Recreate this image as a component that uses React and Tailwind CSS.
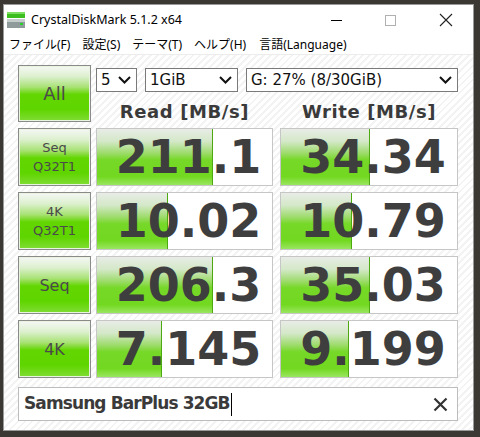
import React from 'react';

const rows = [
  { l1: 'Seq', l2: 'Q32T1', r: '211.1', rw: 'w-[116px]', w: '34.34', ww: 'w-[89px]' },
  { l1: '4K', l2: 'Q32T1', r: '10.02', rw: 'w-[71px]', w: '10.79', ww: 'w-[71px]' },
  { l1: 'Seq', l2: null, r: '206.3', rw: 'w-[116px]', w: '35.03', ww: 'w-[89px]' },
  { l1: '4K', l2: null, r: '7.145', rw: 'w-[65px]', w: '9.199', ww: 'w-[68px]' },
];

const btnBg =
  'bg-[linear-gradient(to_bottom,#f4f7f2_0%,#dcf0ce_18%,#a8e274_38%,#62d600_52%,#5fd500_80%,#7edc30_100%)]';
const fillBg =
  'bg-[linear-gradient(to_bottom,#e8ece6_0%,#d4e8c8_22%,#a0dc70_42%,#76d828_55%,#72d820_85%,#9ae660_100%)]';

function GreenButton({ children, h }) {
  return (
    <div className={`w-[73px] ${h} border border-[#8a8a8a] p-[1px] bg-[#e8f4e0] shrink-0`}>
      <div className={`w-full h-full ${btnBg} flex flex-col items-center justify-center text-[#4a4a4a] leading-[19px]`}>
        {children}
      </div>
    </div>
  );
}

function Cell({ value, fill, w }) {
  return (
    <div className={`relative ${w} h-full border border-[#c6c6c6] bg-white shrink-0`}>
      <div className={`absolute left-0 top-0 bottom-0 ${fill} ${fillBg} border-r border-[#4caa10]`} />
      <div className="relative h-full flex items-center justify-center font-bold text-[46px] text-[#3e3e3e] leading-none pl-[8px]">
        {value}
      </div>
    </div>
  );
}

function Chevron() {
  return (
    <svg width="13" height="8" viewBox="0 0 13 8" className="shrink-0">
      <polyline points="1,1 6.5,6.5 12,1" fill="none" stroke="#111" strokeWidth="2" />
    </svg>
  );
}

function Select({ w, text }) {
  return (
    <div className={`${w} h-[24px] border border-[#7a7a7a] bg-white flex items-center justify-between pl-[4px] pr-[5px] text-[15px] text-[#111] shrink-0`}>
      <span>{text}</span>
      <Chevron />
    </div>
  );
}

export default function App() {
  return (
    <div
      className="w-[480px] h-[437px] bg-[#3b3733] pt-[4px] pl-[3px] overflow-hidden"
      style={{ fontFamily: '"DejaVu Sans", sans-serif' }}
    >
      <div className="w-[471px] h-[427px] bg-white border border-[#9a9a9a] flex flex-col">
        {/* Title bar */}
        <div className="h-[27px] pt-[3px] flex items-center shrink-0">
          <svg width="20" height="18" viewBox="0 0 20 18" className="ml-[2px] mr-[5px]">
            <rect x="1" y="1" width="18" height="6" fill="#3cbf1e" />
            <rect x="1" y="1" width="18" height="2" fill="#7ee060" />
            <rect x="1" y="8" width="18" height="9" fill="#8f9a9a" />
            <rect x="1" y="8" width="18" height="3" fill="#c4cccc" />
            <rect x="14" y="12" width="3" height="2" fill="#2ad02a" />
          </svg>
          <span className="text-[12.5px] text-black" style={{ fontFamily: '"Noto Sans", sans-serif' }}>
            CrystalDiskMark 5.1.2 x64
          </span>
          <div className="flex-1" />
          <div className="w-[11px] h-[1px] bg-black mr-[43px]" />
          <div className="w-[11px] h-[11px] border border-[#b0b0b0] mr-[43px]" />
          <svg width="14" height="14" viewBox="0 0 14 14" className="mr-[20px]">
            <path d="M1 1 L13 13 M13 1 L1 13" stroke="#222" strokeWidth="1.1" />
          </svg>
        </div>
        {/* Menu bar */}
        <div
          className="h-[23px] pt-[3px] flex items-center pl-[5px] text-[12px] text-black border-b border-[#ececec] shrink-0"
          style={{ fontFamily: '"Noto Sans", "Noto Sans CJK JP", sans-serif' }}
        >
          <span className="mr-[12px]">ファイル(F)</span>
          <span className="mr-[12px]">設定(S)</span>
          <span className="mr-[12px]">テーマ(T)</span>
          <span className="mr-[13px]">ヘルプ(H)</span>
          <span>言語(Language)</span>
        </div>
        {/* Client */}
        <div className="flex-1 pl-[14px] pt-[10px] bg-[repeating-linear-gradient(135deg,#ffffff_0px,#ffffff_3px,#f3f3f3_3px,#f3f3f3_5px)]">
          <div className="flex gap-[5px] h-[57px]">
            <GreenButton h="h-[57px]">
              <span className="text-[18px]">All</span>
            </GreenButton>
            <div className="flex flex-col">
              <div className="flex gap-[8px] mt-[3px]">
                <Select w="w-[41px]" text="5" />
                <Select w="w-[93px]" text="1GiB" />
                <Select w="w-[212px]" text="G: 27% (8/30GiB)" />
              </div>
              <div className="flex gap-[7px] mt-[6px] text-[18px] font-bold text-[#3a3a3a] tracking-[0.6px]">
                <div className="w-[177px] text-center">Read [MB/s]</div>
                <div className="w-[178px] text-center">Write [MB/s]</div>
              </div>
            </div>
          </div>
          <div className="flex flex-col gap-[6px] mt-[6px]">
            {rows.map((row, i) => (
              <div key={i} className="flex h-[58px]">
                <GreenButton h="h-[58px]">
                  {row.l2 ? (
                    <>
                      <span className="text-[13px]">{row.l1}</span>
                      <span className="text-[13px]">{row.l2}</span>
                    </>
                  ) : (
                    <span className="text-[16px]">{row.l1}</span>
                  )}
                </GreenButton>
                <div className="w-[5px]" />
                <Cell value={row.r} fill={row.rw} w="w-[177px]" />
                <div className="w-[7px]" />
                <Cell value={row.w} fill={row.ww} w="w-[178px]" />
              </div>
            ))}
          </div>
          <div className="mt-[9px] w-[440px] h-[34px] border border-[#bdbdbd] bg-white flex items-center pl-[5px] pr-[9px]">
            <span className="text-[17px] font-bold text-[#3a3a3a] tracking-[-0.9px]">Samsung BarPlus 32GB</span>
            <div className="w-[1px] h-[23px] bg-black ml-[1px]" />
            <div className="flex-1" />
            <svg width="15" height="15" viewBox="0 0 15 15">
              <path d="M1.5 1.5 L13.5 13.5 M13.5 1.5 L1.5 13.5" stroke="#333" strokeWidth="2.2" />
            </svg>
          </div>
        </div>
      </div>
    </div>
  );
}
